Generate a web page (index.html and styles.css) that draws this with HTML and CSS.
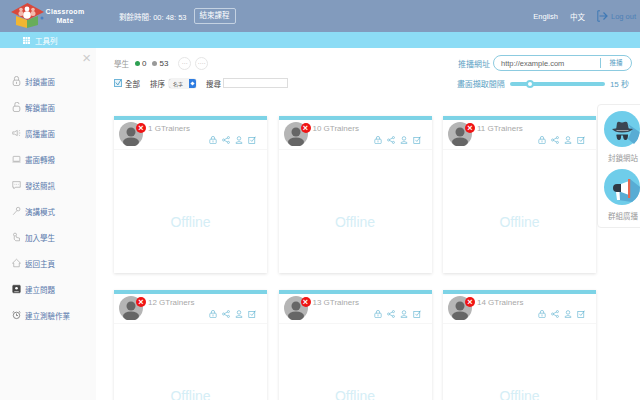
FILE: index.html
```html
<!DOCTYPE html>
<html lang="zh-Hant">
<head>
    <meta charset="UTF-8">
    <title>Classroom Mate</title>
    <link rel="stylesheet" href="styles.css">
</head>
<body>
    <div class="header">
        <svg class="logo" width="34" height="27" viewBox="0 0 34 27">
            <path d="M5 13 L16 17 L16 25 L5 22 Z" fill="#f2b632"/>
            <path d="M16 17 L27 13 L27 22 L16 25 Z" fill="#68ad5a"/>
            <path d="M16.500 0 L33 9 L16.500 17 L0 9 Z" fill="#d9483b"/>
            <circle cx="10" cy="6.500" r="1.800" fill="#f3b9ac"/>
            <circle cx="22" cy="6.500" r="1.800" fill="#f3b9ac"/>
            <ellipse cx="10" cy="10.500" rx="2.500" ry="2.500" fill="#f3b9ac"/>
            <ellipse cx="22" cy="10.500" rx="2.500" ry="2.500" fill="#f3b9ac"/>
            <circle cx="16" cy="6" r="2.400" fill="#fff"/>
            <ellipse cx="16" cy="12" rx="3.800" ry="3.800" fill="#fff"/>
            <circle cx="31" cy="15" r="1.500" fill="#4a7fc1"/>
        </svg>
        <div class="brand">Classroom<br>Mate</div>
        <span class="timer">剩餘時間: 00: 48: 53</span>
        <span class="end-btn">結束課程</span>
        <div class="header-right">
            <span>English</span>
            <span>中文</span>
            <span class="logout">
                <svg width="11" height="12" viewBox="0 0 11 12" fill="none" stroke="#3f79b5" stroke-width="1">
                    <path d="M3 .8 H.8 V11.200 H3"/>
                    <path d="M2.500 6 H10 M6.500 2.500 L10 6 L6.500 9.500" stroke-width="1.200"/>
                </svg>
                Log out
            </span>
        </div>
    </div>
    <div class="toolbar">
        <svg width="7" height="7" viewBox="0 0 7 7" fill="#fff">
            <rect width="2" height="2"/><rect x="2.500" width="2" height="2"/><rect x="5" width="2" height="2"/>
            <rect y="2.500" width="2" height="2"/><rect x="2.500" y="2.500" width="2" height="2"/><rect x="5" y="2.500" width="2" height="2"/>
            <rect y="5" width="2" height="2"/><rect x="2.500" y="5" width="2" height="2"/><rect x="5" y="5" width="2" height="2"/>
        </svg>
        <span>工具列</span>
    </div>

    <div class="content">
        <div class="sidebar">
            <div class="close">×</div>
            <div class="side-item"><svg viewBox="0 0 10 12"><path d="M2.500 5 V3 a2.500 2.500 0 0 1 5 0 V5"/><rect x="1" y="5" width="8" height="6.500" rx="2"/><path d="M5 7 V9.500"/></svg>封鎖畫面</div>
            <div class="side-item"><svg viewBox="0 0 10 12"><path d="M3 5 V3 a2.500 2.500 0 0 1 5 -.5"/><rect x="1" y="5" width="8" height="6.500" rx="2"/></svg>解鎖畫面</div>
            <div class="side-item"><svg viewBox="0 0 12 12"><path d="M1 4.500 H3.500 L7 2.500 V9.500 L3.500 7.500 H1 Z"/><path d="M9 3.500 L10.500 2.500 M9 6 H11 M9 8.500 L10.500 9.500"/></svg>廣播畫面</div>
            <div class="side-item"><svg viewBox="0 0 12 12"><rect x="1.500" y="2.500" width="9" height="6.500" rx=".7"/><path d="M.5 10 H11.500"/></svg>畫面轉撥</div>
            <div class="side-item"><svg viewBox="0 0 12 12"><path d="M1 1.500 H11 V9 H4.500 L2.500 11 V9 H1 Z"/><path d="M3.500 5.200 H4.300 M5.700 5.200 H6.500 M7.900 5.200 H8.700"/></svg>發送簡訊</div>
            <div class="side-item"><svg viewBox="0 0 12 12"><circle cx="8.200" cy="3.500" r="2.400"/><path d="M6.500 5.500 L1.500 11"/></svg>演講模式</div>
            <div class="side-item"><svg viewBox="0 0 12 12"><circle cx="4" cy="2.800" r="2"/><path d="M3 5 V9 L5 11 H10 V7.500 L6 6.500 V5"/></svg>加入學生</div>
            <div class="side-item"><svg viewBox="0 0 12 12"><path d="M.7 6.200 L6 1 L11.300 6.200 H9.700 V11 H2.300 V6.200 Z"/></svg>返回主頁</div>
            <div class="side-item dark"><svg viewBox="0 0 12 12"><rect x="1" y="1" width="10" height="10" rx="1" fill="#444" stroke="#444"/><circle cx="6" cy="5" r="1.800" fill="#fff" stroke="none"/><path d="M3 9.500 H9" stroke="#fff"/></svg>建立問題</div>
            <div class="side-item dark"><svg viewBox="0 0 12 12"><circle cx="6" cy="6.500" r="4.300"/><path d="M6 4 V6.700 H8 M.8 2.800 L2.800 1 M11.200 2.800 L9.200 1"/></svg>建立測驗作業</div>
        </div>

        <div class="main">
            <div class="controls">
                <div class="controls-left">
                    <div class="row">
                        <span class="muted">學生</span>
                        <span class="dot green"></span><span class="count">0</span>
                        <span class="dot grey"></span><span class="count">53</span>
                        <span class="more first">···</span>
                        <span class="more">····</span>
                    </div>
                    <div class="row second">
                        <svg class="check" width="8" height="8" viewBox="0 0 8 8">
                            <rect x=".5" y=".5" width="7" height="7" fill="#e8f4fa" stroke="#6fb5d8"/>
                            <path d="M1.800 3.500 L3.800 6 L6.800 1" fill="none" stroke="#5aa5cc"/>
                        </svg>
                        <span class="label all">全部</span>
                        <span class="label">排序</span>
                        <span class="sort"><span>名字</span><i></i></span>
                        <span class="label">搜尋</span>
                        <span class="search"></span>
                    </div>
                </div>
                <div class="controls-right">
                    <div class="row right">
                        <span class="blue-label">推播網址</span>
                        <div class="url-box"><span class="url">http://example.com</span><span class="push">推播</span></div>
                    </div>
                    <div class="row right second-r">
                        <span class="blue-label">畫面擷取間隔</span>
                        <div class="slider"><span class="knob"></span></div>
                        <span class="secs">15 秒</span>
                    </div>
                </div>
            </div>

            <div class="grid" id="grid"></div>
        </div>

        <div class="float-panel">
            <svg width="36" height="36" viewBox="0 0 36 36">
                <circle cx="18" cy="18" r="18" fill="#6fcdea"/>
                <path d="M24 13 L28 19 L24 28 L30 33 A18 18 0 0 0 35.600 21 Z" fill="#58acd4"/>
                <path d="M12 19 L13 12 Q14 10 16 11 Q18 12 20 11 Q23 10 23.500 12 L25 19 Z" fill="#3b4652"/>
                <path d="M8 18 Q18 16 29 18 Q26 21.500 18 21.500 Q11 21.500 8 18 Z" fill="#3b4652"/>
                <path d="M12.500 19.500 H24.500 V20 H12.500 Z" fill="#fff"/>
                <path d="M12.500 24 H17 Q17.500 29 15 29 Q12.500 29 12.500 24 Z M19 24 H24 Q24 29 21.500 29 Q19 29 19 24 Z" fill="#2f3944"/>
                <path d="M12.500 24 H24" stroke="#2f3944"/>
            </svg>
            <span>封鎖網站</span>
            <svg class="second-icon" width="36" height="36" viewBox="0 0 36 36">
                <circle cx="18" cy="18" r="18" fill="#6fcdea"/>
                <path d="M26 10 L36 18 A18 18 0 0 1 28 33 L14 31 L14 23 Z" fill="#58acd4"/>
                <path d="M13 15 H17 V23 H13 A4 4 0 0 1 13 15 Z" fill="#2f3944"/>
                <path d="M17 15 L25 12 V26 L17 23 Z" fill="#fff"/>
                <path d="M12 23 H15.500 L16 31 H13 Z" fill="#fff"/>
                <rect x="24" y="10" width="2.200" height="19" fill="#e8674f"/>
            </svg>
            <span>群組廣播</span>
        </div>
    </div>

    <script>
        const names = [1, 10, 11, 12, 13, 14];
        const grid = document.getElementById('grid');
        names.forEach(function (n) {
            grid.innerHTML += `
            <div class="card">
                <div class="card-head">
                    <div class="avatar">
                        <svg width="24" height="24" viewBox="0 0 24 24">
                            <circle cx="12" cy="12" r="12" fill="#b5b5b5"/>
                            <circle cx="12" cy="10" r="4.500" fill="#666"/>
                            <ellipse cx="12" cy="20" rx="8" ry="4.500" fill="#666"/>
                        </svg>
                        <span class="badge">×</span>
                    </div>
                    <div class="card-info">
                        <div class="card-name">${n} GTrainers</div>
                        <div class="card-icons">
                            <svg viewBox="0 0 10 10"><path d="M3 4 V2.500 a2 2 0 0 1 4 0 V4"/><rect x="1" y="4" width="8" height="5.500" rx="1"/><path d="M5 5.500 V8"/></svg>
                            <svg viewBox="0 0 10 10"><circle cx="2" cy="5" r="1.300"/><circle cx="8" cy="2" r="1.300"/><circle cx="8" cy="8" r="1.300"/><path d="M3.200 4.400 L6.800 2.600 M3.200 5.600 L6.800 7.400"/></svg>
                            <svg viewBox="0 0 10 10"><circle cx="5" cy="3" r="2.200"/><path d="M1.500 9.500 V8 Q5 5.800 8.500 8 V9.500 Z"/></svg>
                            <svg viewBox="0 0 10 10"><rect x="1" y="2" width="7.500" height="7.500"/><path d="M3 4.800 L4.800 6.800 L9.500 .8"/></svg>
                        </div>
                    </div>
                </div>
                <div class="card-body">Offline</div>
            </div>`;
        });
    </script>
</body>
</html>
```

FILE: styles.css
```css
html,
body {
    height: 100%;
}

body {
    margin: 0;
    overflow: hidden;
    font-family: 'Liberation Sans', 'Noto Sans CJK TC', sans-serif;
    background-color: #fff;
    color: #555;
    display: flex;
    flex-direction: column;
}

/* top bar */
.header {
    height: 32px;
    flex: none;
    background-color: #829bbd;
    color: #fff;
    display: flex;
    align-items: center;
    padding-left: 11px;
    padding-right: 4px;
    font-size: 7.5px;
}

.logo {
    flex: none;
}

.brand {
    width: 40px;
    text-align: center;
    font-size: 7px;
    font-weight: bold;
    line-height: 9px;
    letter-spacing: 0.3px;
}

.timer {
    margin-left: 34px;
}

.end-btn {
    margin-left: 7px;
    padding: 2px 5px;
    line-height: 10px;
    border: 1px solid #c4d2e2;
    border-radius: 2px;
}

.header-right {
    margin-left: auto;
    display: flex;
    align-items: center;
    gap: 12px;
}

.logout {
    display: flex;
    align-items: center;
    gap: 3px;
    color: #4d80b6;
}

.toolbar {
    height: 16px;
    flex: none;
    background-color: #8cdcf5;
    color: #fff;
    display: flex;
    align-items: center;
    gap: 5px;
    padding-left: 23px;
    font-size: 7.5px;
}

.content {
    flex: 1;
    display: flex;
    position: relative;
    min-height: 0;
}

/* left menu */
.sidebar {
    width: 96px;
    flex: none;
    background-color: #fafafa;
    padding-top: 20px;
    box-sizing: border-box;
    position: relative;
}

.close {
    position: absolute;
    top: 2px;
    right: 5px;
    font-size: 15px;
    line-height: 15px;
    color: #ccc;
}

.side-item {
    height: 26px;
    display: flex;
    align-items: center;
    gap: 4px;
    padding-left: 12px;
    font-size: 7.5px;
    color: #5878ab;
}

.side-item svg {
    width: 9px;
    height: 10px;
    flex: none;
    fill: none;
    stroke: #9a9a9a;
    stroke-width: 0.8;
}

.side-item.dark svg {
    stroke: #444;
}

/* main area */
.main {
    flex: 1;
    min-width: 0;
    padding: 0 0 0 18px;
}

.controls {
    height: 68px;
    display: flex;
    justify-content: space-between;
    padding-right: 8px;
    box-sizing: border-box;
}

.row {
    display: flex;
    align-items: center;
}

.controls-left {
    padding-top: 8px;
    font-size: 7.5px;
}

.controls-left .row {
    height: 14px;
}

.controls-left .second {
    margin-top: 6px;
}

.muted {
    color: #999;
}

.dot {
    width: 5px;
    height: 5px;
    border-radius: 50%;
    margin-left: 6px;
    margin-right: 2px;
}

.dot.green {
    background-color: #2ea052;
}

.dot.grey {
    background-color: #999;
}

.count {
    font-size: 8px;
    color: #444;
}

.more {
    width: 11px;
    height: 11px;
    margin-left: 4px;
    border: 1px solid #e6e6e6;
    border-radius: 50%;
    font-size: 6px;
    line-height: 10px;
    text-align: center;
    color: #999;
}

.more.first {
    margin-left: 10px;
}

.check {
    margin-right: 3px;
}

.label {
    color: #444;
}

.label.all {
    margin-right: 10px;
}

.sort {
    width: 27px;
    height: 9px;
    margin: 0 10px 0 4px;
    border-radius: 2px;
    background-color: #f4f4f4;
    box-shadow: 0 0 1px #888;
    display: flex;
    justify-content: space-between;
    align-items: center;
    font-size: 5px;
    padding-left: 4px;
    box-sizing: border-box;
}

.sort i {
    width: 7px;
    height: 9px;
    border-radius: 0 2px 2px 0;
    background-color: #2f7de1;
    display: flex;
    align-items: center;
    justify-content: center;
}

.sort i::before {
    content: "";
    width: 3px;
    height: 3px;
    background-color: #fff;
    transform: rotate(45deg);
}

.search {
    width: 63px;
    height: 8px;
    margin-left: 2px;
    border: 1px solid #ddd;
}

.controls-right {
    padding-top: 7px;
}

.row.right {
    justify-content: flex-end;
}

.blue-label {
    font-size: 8px;
    color: #5c9fc4;
}

.url-box {
    width: 137px;
    height: 14px;
    margin-left: 3px;
    border: 1px solid #8ccbe0;
    border-radius: 8px;
    display: flex;
    align-items: center;
    font-size: 7.5px;
    color: #666;
}

.url {
    flex: 1;
    padding-left: 7px;
}

.push {
    width: 30px;
    text-align: center;
    border-left: 1px solid #8ccbe0;
    line-height: 10px;
    color: #5c9fc4;
    font-size: 6.5px;
}

.second-r {
    margin-top: 7px;
    padding-right: 3px;
}

.slider {
    width: 95px;
    height: 4px;
    margin: 0 5px;
    border-radius: 2px;
    background-color: #7dd3e6;
    position: relative;
}

.knob {
    position: absolute;
    left: 16px;
    top: -2px;
    width: 4px;
    height: 4px;
    border: 2px solid #7dd3e6;
    border-radius: 50%;
    background-color: #fff;
}

.secs {
    font-size: 8px;
    color: #5c9fc4;
}

/* student cards */
.grid {
    display: grid;
    grid-template-columns: repeat(3, 153px);
    grid-auto-rows: 157px;
    column-gap: 11.5px;
    row-gap: 17px;
}

.card {
    border-top: 4px solid #7dd3e6;
    box-sizing: border-box;
    background-color: #fff;
    box-shadow: 0 1px 3px rgba(0, 0, 0, 0.12);
    display: flex;
    flex-direction: column;
}

.card-head {
    height: 27px;
    padding: 2px 0 0 5px;
    display: flex;
    border-bottom: 1px solid #f6f6f6;
}

.avatar {
    width: 24px;
    height: 24px;
    position: relative;
    flex: none;
}

.badge {
    position: absolute;
    top: 1px;
    right: -3px;
    width: 10px;
    height: 10px;
    border-radius: 50%;
    background-color: #f01414;
    color: #fff;
    font-size: 9px;
    font-weight: bold;
    line-height: 10px;
    text-align: center;
}

.card-info {
    flex: 1;
    padding: 1px 11px 0 5px;
}

.card-name {
    font-size: 8px;
    line-height: 12px;
    color: #a8a8a8;
}

.card-icons {
    display: flex;
    justify-content: flex-end;
    gap: 5px;
    margin-top: 1px;
}

.card-icons svg {
    width: 8px;
    height: 8px;
    fill: none;
    stroke: #61b4d2;
    stroke-width: 0.8;
}

.card-body {
    flex: 1;
    display: flex;
    align-items: center;
    justify-content: center;
    padding-top: 20px;
    box-sizing: border-box;
    font-size: 14px;
    color: #d5eef6;
}

/* floating panel on the right */
.float-panel {
    position: absolute;
    top: 56px;
    left: 597px;
    width: 48px;
    height: 124px;
    box-sizing: border-box;
    padding: 6px 0 0 6px;
    background-color: #fff;
    border: 1px solid #eee;
    border-radius: 4px;
    display: flex;
    flex-direction: column;
    align-items: flex-start;
    font-size: 7.5px;
    color: #999;
}

.float-panel span {
    margin-top: 5px;
    margin-left: 4px;
}

.second-icon {
    margin-top: 6px;
}
```
